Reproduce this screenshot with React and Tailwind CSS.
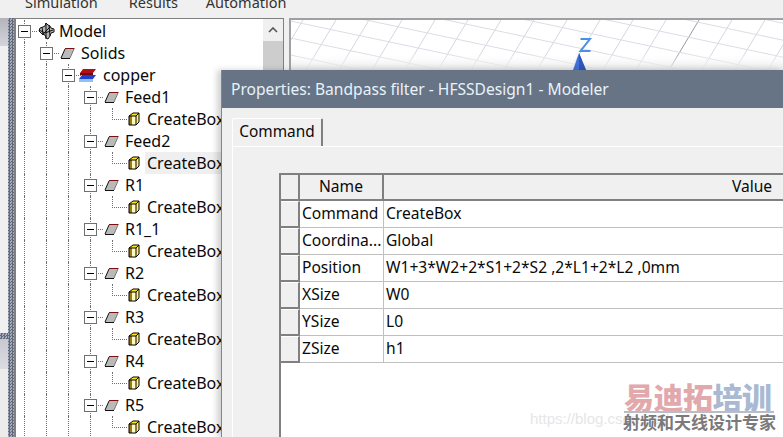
const nodes = ["Feed1", "Feed2", "R1", "R1_1", "R2", "R3", "R4", "R5"];

const props = [
  ["Command", "CreateBox"],
  ["Coordina...", "Global"],
  ["Position", "W1+3*W2+2*S1+2*S2 ,2*L1+2*L2 ,0mm"],
  ["XSize", "W0"],
  ["YSize", "L0"],
  ["ZSize", "h1"],
];

function ModelIcon() {
  return (
    <svg width="17" height="18" viewBox="0 0 17 18">
      <path d="M8 1l2 2 2 1 1 2 3 1v3l-3 1-1 3-2 3-2-1-1-3-3-1-3-3 1-3 3-1 2-1z" fill="#b4b4b4" stroke="#111" strokeWidth="1" />
      <path d="M8 1v16M4 5l1 7M11 3l1 11M1 8l6 3 8-3M4 13l8-8" stroke="#111" strokeWidth="1" fill="none" />
    </svg>
  );
}

function SolidIcon() {
  return (
    <svg width="15" height="11" viewBox="0 0 15 11">
      <path d="M1 10l4-9h9l-4 9z" fill="#bababa" />
      <path d="M5 0.5h9.5" stroke="#7a1010" strokeWidth="1" />
      <path d="M1 10l4-9" stroke="#111" strokeWidth="1" />
      <path d="M1 10.5h9" stroke="#111" strokeWidth="1" />
      <path d="M10 10l4-9" stroke="#777777" strokeWidth="1" />
    </svg>
  );
}

function MaterialIcon() {
  return (
    <svg width="17" height="13" viewBox="0 0 17 13">
      <path d="M4 0h13l-3 4H1z" fill="#b01018" />
      <path d="M1 4h13v2H1z" fill="#70080c" />
      <path d="M3 6h14l-3 4H0z" fill="#1f3fd0" />
      <path d="M0 10h14v3H0z" fill="#8fc0f0" />
    </svg>
  );
}

function BoxIcon() {
  return (
    <svg width="12" height="14" viewBox="0 0 12 14">
      <path d="M1 4l4-3h6l-3 3z" fill="#ffe820" />
      <path d="M8 4l3-3v9l-3 3z" fill="#fff27a" />
      <path d="M4 4h4v9H4z" fill="#fff9c0" />
      <path d="M1 4h3v9H1z" fill="#a07810" />
      <path d="M1 4l4-3h6v9l-3 3H1zM1 4h7v9M8 4l3-3" stroke="#000" strokeWidth="1" fill="none" />
    </svg>
  );
}

function Guides({ count }) {
  return Array.from({ length: count }).map((_, i) => (
    <div key={i} className="w-[22px] h-full shrink-0 flex justify-center">
      <div className="w-0 h-full border-l border-dotted border-[#707070]" />
    </div>
  ));
}

function Toggle() {
  return (
    <div className="w-[22px] h-full shrink-0 relative flex items-center justify-center">
      <div className="absolute left-[11px] top-0 h-full w-0 border-l border-dotted border-[#707070]" />
      <div className="absolute left-[17px] top-[11px] w-[7px] border-t border-dotted border-[#707070]" />
      <div className="relative w-[13px] h-[13px] bg-white border border-[#707070] flex items-center justify-center">
        <div className="w-[7px] h-px bg-black" />
      </div>
    </div>
  );
}

function Row({ depth, icon, label, iconPad = "pl-[3px]" }) {
  return (
    <div className="h-[22px] flex items-center">
      <Guides count={depth} />
      <Toggle />
      <div className={`w-[24px] shrink-0 flex items-center ${iconPad}`}>{icon}</div>
      <span className="leading-[22px]">{label}</span>
    </div>
  );
}

function FeatureRow({ selected }) {
  return (
    <div className="h-[22px] flex items-center">
      <Guides count={4} />
      <div className="w-[22px] h-full shrink-0 relative">
        <div className="absolute left-[11px] top-0 w-[15px] h-[12px] border-l border-b border-dotted border-[#707070]" />
      </div>
      <div className="w-[24px] shrink-0 flex items-center pl-[5px]">
        <BoxIcon />
      </div>
      <span className={selected ? "bg-[#efefef] px-[2px] -ml-[2px] pr-6 leading-[22px]" : "leading-[22px]"}>CreateBox</span>
    </div>
  );
}

function Tree() {
  return (
    <div className="flex-1 bg-white pt-px text-[16px] text-[#0a0a0a] whitespace-nowrap overflow-hidden">
      <div className="-ml-[3px]">
        <Row depth={0} icon={<ModelIcon />} label="Model" />
        <Row depth={1} icon={<SolidIcon />} label="Solids" />
        <Row depth={2} icon={<MaterialIcon />} label="copper" iconPad="pl-0" />
        {nodes.map((n) => (
          <div key={n}>
            <Row depth={3} icon={<SolidIcon />} label={n} />
            <FeatureRow selected={n === "Feed2"} />
          </div>
        ))}
      </div>
    </div>
  );
}

function Scrollbar() {
  return (
    <div className="w-[20px] bg-[#f0f0f0] shrink-0 flex flex-col">
      <div className="h-[22px] flex items-center justify-center">
        <svg width="10" height="6" viewBox="0 0 10 6">
          <path d="M1 5l4-4 4 4" stroke="#555" strokeWidth="1.6" fill="none" />
        </svg>
      </div>
      <div className="flex-1 bg-[#cdcdcd]" />
    </div>
  );
}

function Viewport() {
  const cross = Array.from({ length: 22 }).map((_, i) => i);
  const along = Array.from({ length: 30 }).map((_, i) => i);
  return (
    <div className="flex-1 bg-white border-l-2 border-t-2 border-[#a0a0a0] overflow-hidden">
      <svg width="493" height="52" viewBox="0 0 493 52">
        {cross.map((i) => (
          <line key={i} x1={-114 + i * 33} y1={-10} x2={-174 + i * 33} y2={90} stroke={i === 16 ? "#9a9aa0" : "#d6d6e2"} strokeWidth="1" />
        ))}
        {along.map((i) => (
          <line key={i} x1={-10} y1={-120 + i * 17} x2={510} y2={-10 + i * 17} stroke="#dcdce6" strokeWidth="1" />
        ))}
        <defs>
          <linearGradient id="fade" x1="0" y1="0" x2="0" y2="1">
            <stop offset="0" stopColor="#ffffff" stopOpacity="0" />
            <stop offset="1" stopColor="#e4e4e4" />
          </linearGradient>
        </defs>
        <rect x="0" y="33" width="493" height="17" fill="url(#fade)" />
        <path d="M288 33l-6 17h13z" fill="#3f6fd8" />
        <path d="M288 33v17h7z" fill="#2f56b8" />
        <path d="M289.5 19h9.5l-9.5 12h10" stroke="#4a90e8" strokeWidth="2" fill="none" />
      </svg>
    </div>
  );
}

function Handle({ header }) {
  return (
    <div className={`w-[19px] shrink-0 bg-[#f0f0f0] border-[#808080] border-r-2 border-b-2 ${header ? "" : "border-t border-t-white"}`} />
  );
}

function PropTable() {
  return (
    <div className="ml-[46px] flex-1 bg-white border-l-2 border-t-2 border-[#808080] overflow-hidden text-[15.6px] text-[#0a0a0a]">
      <div className="h-[26px] flex bg-[#f0f0f0]">
        <Handle header />
        <div className="w-[84px] shrink-0 flex items-center justify-center border-r-2 border-b-2 border-[#808080]">Name</div>
        <div className="w-[736px] shrink-0 flex items-center justify-center border-b-2 border-[#808080]">Value</div>
      </div>
      {props.map(([name, value]) => (
        <div key={name} className="h-[27px] flex">
          <Handle />
          <div className="w-[84px] shrink-0 flex items-center pl-[2px] border-r border-b border-[#c0c0c0] whitespace-nowrap">{name}</div>
          <div className="w-[736px] shrink-0 flex items-center pl-[2px] border-b border-[#c0c0c0]">{value}</div>
        </div>
      ))}
    </div>
  );
}

function Dialog() {
  return (
    <div className="absolute left-[221px] top-[70px] right-0 bottom-0 flex flex-col bg-[#f0f0f0] border-l border-[#7b8799] shadow-[-4px_0_6px_rgba(0,0,0,0.18)] font-['Noto_Sans',sans-serif]">
      <div className="h-[38px] shrink-0 bg-[#667486] flex items-center pl-[9px] pt-[2px] text-[15.6px] text-[#e8f2fa] whitespace-nowrap">
        Properties: Bandpass filter - HFSSDesign1 - Modeler
      </div>
      <div className="flex-1 flex flex-col pt-[10px] pl-[10px] min-h-0">
        <div className="flex">
          <div className="w-[91px] h-[28px] flex items-center justify-center pb-[2px] bg-[#f0f0f0] border-t border-l border-white border-r-2 border-r-[#808080] rounded-t-[2px] text-[15.4px] text-[#0a0a0a]">
            Command
          </div>
        </div>
        <div className="flex-1 flex flex-col pt-[26px] border-t border-l border-white min-h-0">
          <PropTable />
        </div>
      </div>
    </div>
  );
}

function Watermark() {
  return (
    <div className="absolute left-[530px] top-[381px] w-[253px] h-[56px] pointer-events-none">
      <div className="absolute left-0 top-[27px] text-[15px] text-[#e6e6e6] font-['Liberation_Sans',sans-serif] whitespace-nowrap">
        https://blog.csdn.net/
      </div>
      <div className="absolute left-[94px] top-0 leading-[30px] text-[30px] font-black tracking-[-0.5px] whitespace-nowrap font-['Noto_Sans_CJK_SC',sans-serif]">
        <span className="text-[#e2a9ad]">易迪拓</span>
        <span className="text-[#a9b9d2]">培训</span>
      </div>
      <div className="absolute left-[94px] top-[30px] w-[150px] h-[2px] bg-[#b8bdc8]" />
      <div className="absolute left-[93px] top-[32px] leading-[18px] text-[17px] font-bold text-[#7a7a7a] whitespace-nowrap font-['Noto_Sans_CJK_SC',sans-serif]">
        射频和天线设计专家
      </div>
    </div>
  );
}

export default function App() {
  return (
    <div className="relative w-[783px] h-[437px] overflow-hidden bg-[#f0f0f0] font-['Noto_Sans',sans-serif]">
      <div className="h-[18px] overflow-hidden">
        <div className="flex gap-[31px] pl-[25px] -mt-[8px] leading-[20px] text-[14.5px] text-[#333333]">
          <span>Simulation</span>
          <span>Results</span>
          <span className="-ml-[3px]">Automation</span>
        </div>
      </div>
      <div className="flex h-[419px]">
        <div className="w-[8px] shrink-0 flex flex-col">
          <div className="h-[28px] bg-gradient-to-b from-[#b4b4bc] to-[#d4d4dc]" />
          <div className="h-[287px] bg-[#f0f0f0]" />
          <div className="h-[6px] bg-[repeating-conic-gradient(#5f6a80_0_25%,#a8acb8_0_50%)] bg-[length:3px_3px]" />
          <div className="h-[30px] bg-gradient-to-b from-[#c8c8d2] to-[#dcdce2]" />
          <div className="flex-1 bg-[#ececec]" />
        </div>
        <div className="w-[6px] shrink-0 bg-[repeating-conic-gradient(#5f6a80_0_25%,#a8acb8_0_50%)] bg-[length:3px_3px]" />
        <div className="w-[270px] shrink-0 flex border-l-2 border-t border-r border-[#808080]">
          <Tree />
          <Scrollbar />
        </div>
        <div className="w-[5px] shrink-0" />
        <Viewport />
      </div>
      <Dialog />
      <Watermark />
    </div>
  );
}
